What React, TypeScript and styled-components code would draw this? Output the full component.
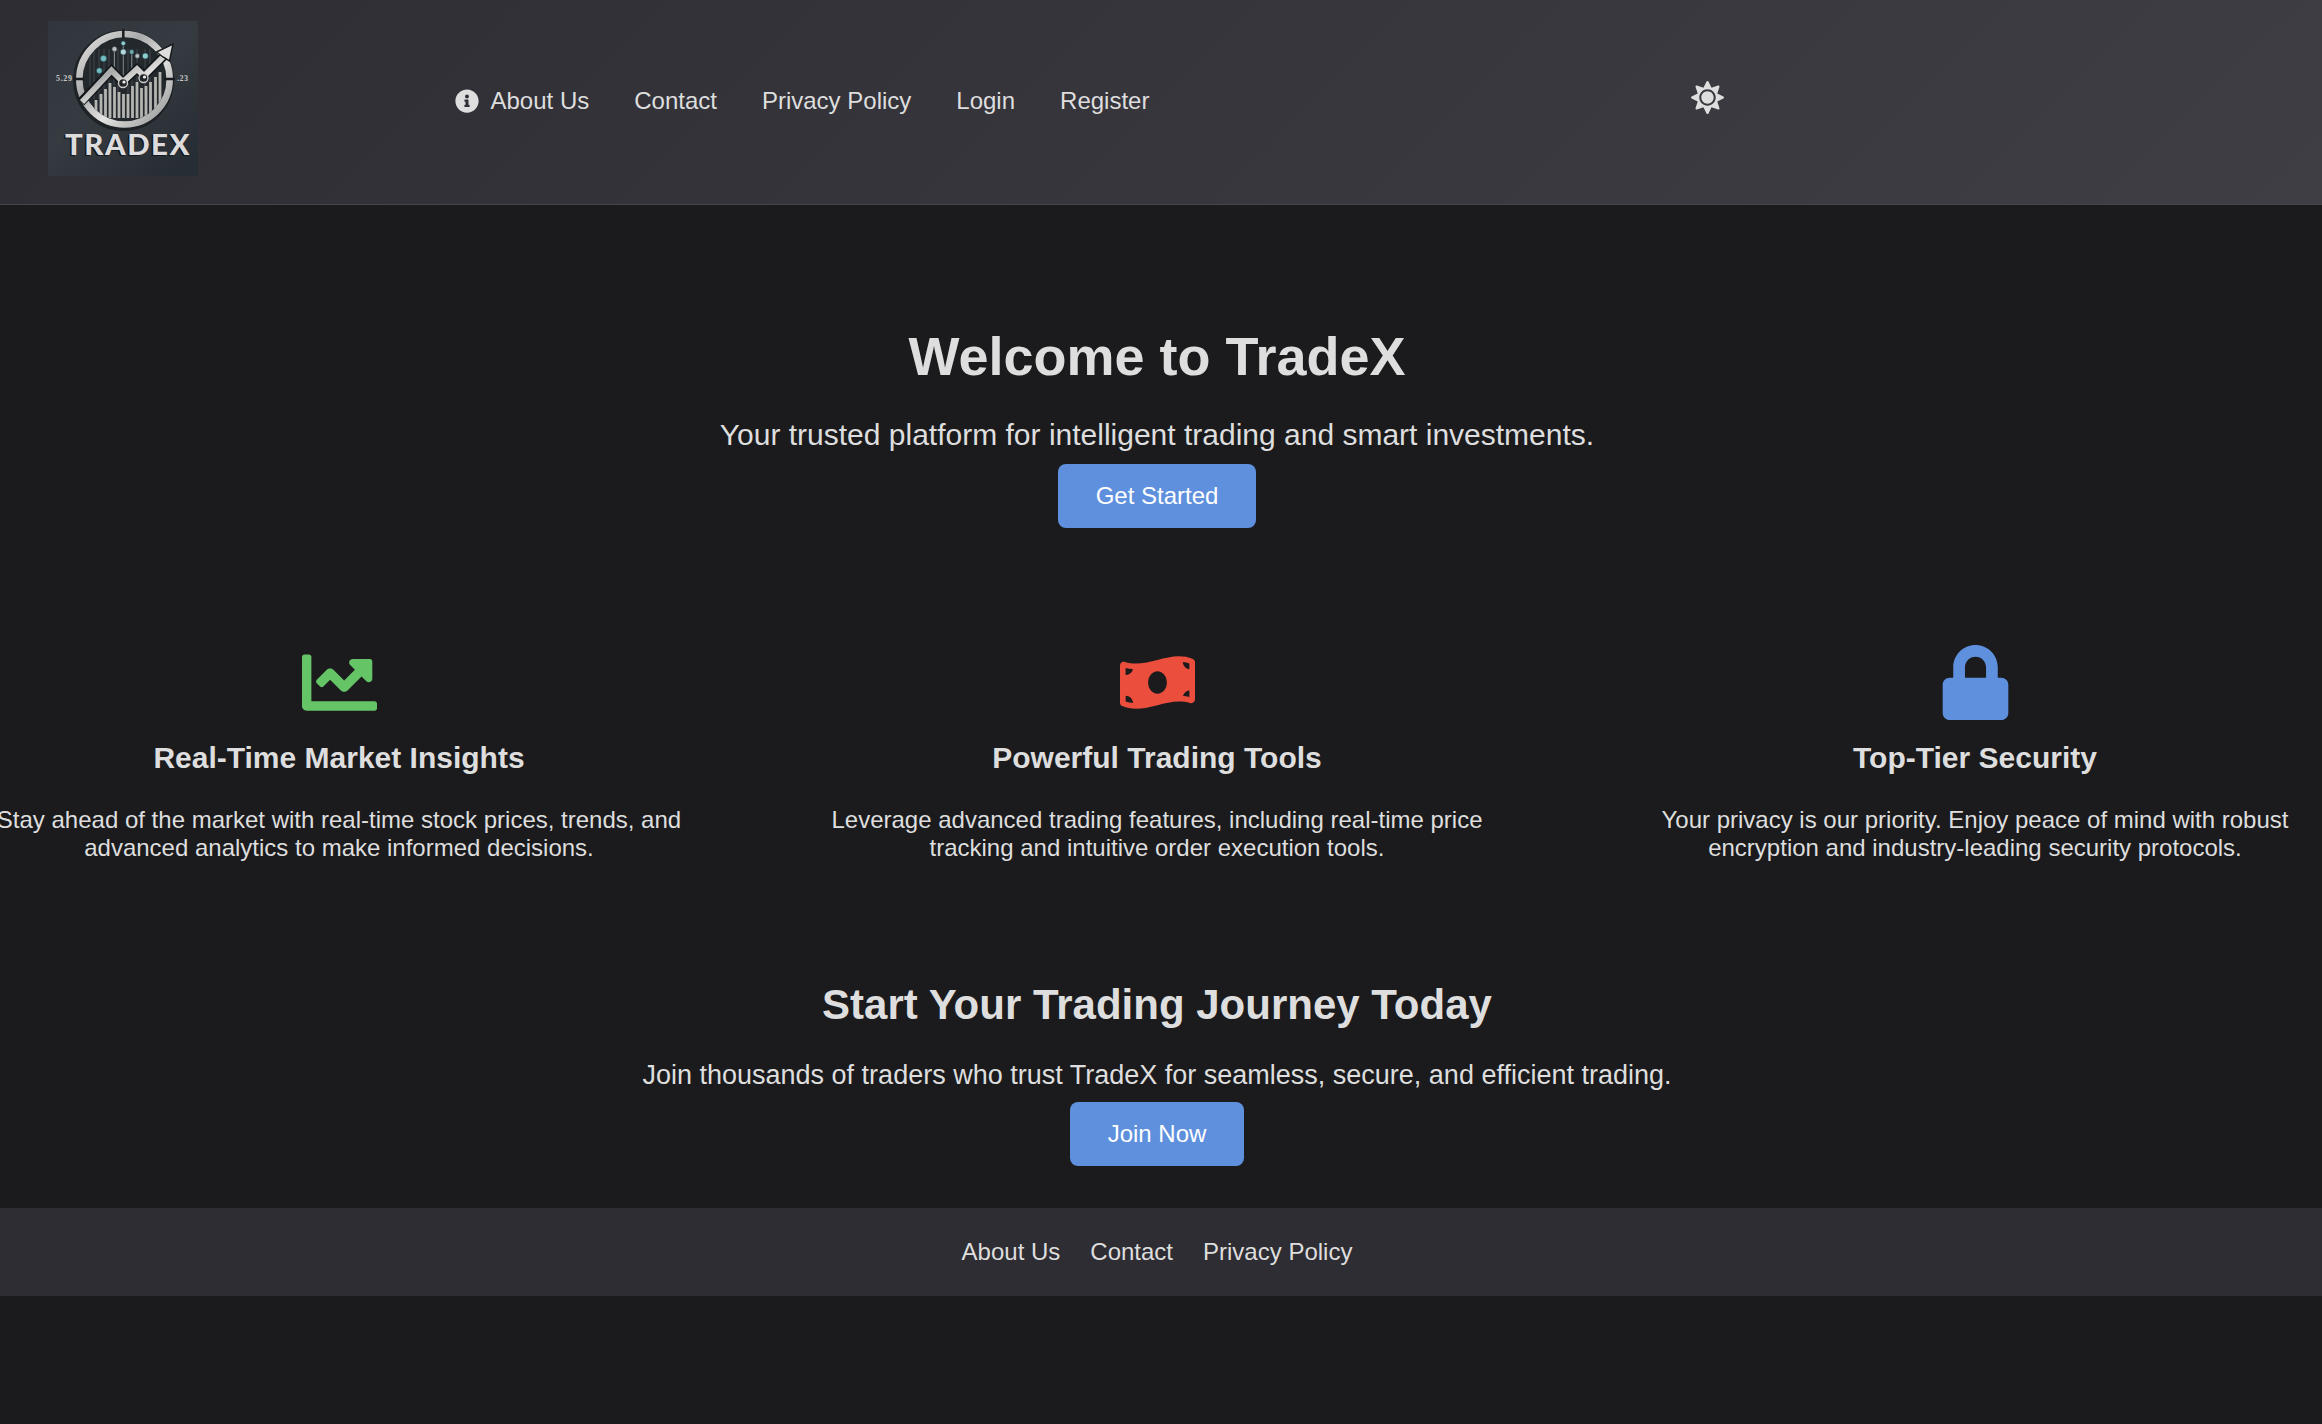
import React from "react";
import styled, { createGlobalStyle } from "styled-components";
import { FaChartLine, FaInfoCircle, FaLock, FaMoneyBillWave, FaSun } from "react-icons/fa";

const GlobalStyle = createGlobalStyle`
  * { box-sizing: border-box; }
  html, body { margin: 0; padding: 0; background: #1b1b1d; overflow: hidden; }
  body {
    font-family: "Liberation Sans", Arial, Helvetica, sans-serif;
    font-size: 24px;
    color: #dedede;
  }
`;

const Page = styled.div`
  width: 2322px;
  height: 1424px;
  overflow: hidden;
`;

const Header = styled.header`
  display: flex;
  align-items: flex-start;
  height: 205px;
  padding: 21px 0 0 48px;
  background: linear-gradient(135deg, #2e2d33, #3f3e45);
  border-bottom: 1px solid #45444b;
`;

const Logo = styled.svg`
  display: block;
  width: 150px;
  height: 155px;
`;

const Nav = styled.nav`
  display: flex;
  align-items: center;
  gap: 45px;
  margin: 66px 0 0 257px;
  line-height: 28px;
`;

const NavLink = styled.a`
  display: flex;
  align-items: center;
  gap: 11.5px;
  color: inherit;
  white-space: nowrap;
`;

const ThemeToggle = styled.button`
  display: flex;
  margin: 60px 0 0 541.5px;
  padding: 0;
  border: 0;
  background: none;
  color: #dedede;
  font-size: 33px;
`;

const Content = styled.div`
  width: 2314px;
  text-align: center;
`;

const Hero = styled.section`
  display: flex;
  flex-direction: column;
  align-items: center;
  height: 440px;
  padding-top: 119px;
`;

const HeroTitle = styled.h1`
  margin: 0;
  font-size: 54px;
  line-height: 64px;
`;

const HeroText = styled.p`
  margin: 30px 0 12px;
  font-size: 30px;
  line-height: 34px;
`;

const Button = styled.button`
  height: 64px;
  padding: 0 37.5px;
  border: 0;
  border-radius: 8px;
  background: #5e90dd;
  color: #fff;
  font: 24px/64px "Liberation Sans", Arial, sans-serif;
`;

const Features = styled.section`
  display: grid;
  grid-template-columns: repeat(3, 698px);
  justify-content: center;
  column-gap: 120px;
  height: 327px;
`;

const Feature = styled.article`
  display: flex;
  flex-direction: column;
  align-items: center;
`;

const FeatureIcon = styled.div<{ $color: string }>`
  display: flex;
  font-size: 75px;
  color: ${(p) => p.$color};
`;

const FeatureTitle = styled.h3`
  margin: 21px 0 31px;
  font-size: 30px;
  line-height: 34px;
`;

const FeatureText = styled.p`
  margin: 0;
  font-size: 24px;
  line-height: 28px;
`;

const Cta = styled.section`
  display: flex;
  flex-direction: column;
  align-items: center;
  height: 236px;
  padding-top: 8px;
`;

const CtaTitle = styled.h2`
  margin: 0;
  font-size: 42px;
  line-height: 50px;
`;

const CtaText = styled.p`
  margin: 29px 0 11px;
  font-size: 27px;
  line-height: 32px;
`;

const Footer = styled.footer`
  display: flex;
  justify-content: center;
  align-items: center;
  gap: 30px;
  height: 88px;
  padding-right: 8px;
  background: #2e2d33;
`;

const FooterLink = styled.a`
  color: inherit;
`;

const bars = [
  [48, 79], [53, 73], [57.5, 68], [62, 62], [66.5, 66], [71, 71], [75.5, 73], [80, 73],
  [84.5, 65], [89, 61], [93.5, 67], [98, 65], [102.5, 61], [107.5, 56], [112, 51],
];

const dots: [number, number, number, string][] = [
  [51.3, 49.7, 2.9, "#6fbdc0"],
  [55.5, 37.5, 3.2, "#6fbdc0"],
  [66.5, 28, 2.6, "#b9bec0"],
  [75.3, 22.3, 2.3, "#8fcdd0"],
  [75.3, 31, 3, "#b5dadd"],
  [83.7, 31, 2.4, "#6fa9ae"],
  [89.3, 35, 2.4, "#b9bec0"],
  [97.3, 35, 3, "#8ccfd1"],
];

const TradexLogo = () => (
  <Logo viewBox="0 0 150 155">
    <defs>
      <linearGradient id="plate" x1="0" y1="0" x2="0.8" y2="1">
        <stop offset="0" stopColor="#30363d" />
        <stop offset="0.5" stopColor="#363b41" />
        <stop offset="1" stopColor="#272d34" />
      </linearGradient>
      <linearGradient id="metal" x1="0" y1="0" x2="1" y2="1">
        <stop offset="0" stopColor="#e4e4e2" />
        <stop offset="0.35" stopColor="#a9aaaa" />
        <stop offset="0.6" stopColor="#e3e3e1" />
        <stop offset="1" stopColor="#8e9091" />
      </linearGradient>
      <clipPath id="dial"><circle cx="76.500" cy="58.300" r="42" /></clipPath>
    </defs>
    <rect width="150" height="155" fill="url(#plate)" />
    <circle cx="75.500" cy="59.500" r="46" fill="none" stroke="#15191d" strokeWidth="9" opacity="0.7" />
    <circle cx="76.500" cy="58.300" r="42" fill="#23282d" />
    <g stroke="#41474e" strokeWidth="1">
      {[42, 46, 51, 56, 61, 66, 70, 80, 84, 89, 97, 102].map((x) => (
        <path key={x} d={`M${x} 28V78`} clipPath="url(#dial)" />
      ))}
    </g>
    <g clipPath="url(#dial)" stroke="#b4b4b1" strokeWidth="2.800">
      {bars.map(([x, y]) => <path key={x} d={`M${x} ${y}V97`} />)}
    </g>
    <circle cx="76.500" cy="58.300" r="45.200" fill="none" stroke="url(#metal)" strokeWidth="6.500" />
    <path d="M75.300 8V17M26 58H36M116 58H127" stroke="#171b1f" strokeWidth="2.500" />
    <path d="M75.300 24V58M66.500 28V52M83.700 31V50" stroke="#7c878e" strokeWidth="1" />
    {dots.map(([x, y, r, fill]) => (
      <circle key={`${x}-${y}`} cx={x} cy={y} r={r} fill={fill} stroke="#1d3439" strokeWidth="0.600" />
    ))}
    <path d="M33 81L63.500 49.500L75 61L89 48L96 55L118 33" fill="none" stroke="#14171a" strokeWidth="9" />
    <path d="M34 81L63.500 49.500L75 61L89 48L96 55L117 34" fill="none" stroke="url(#metal)" strokeWidth="5.800" />
    <path d="M108.500 31L125 23L121.500 40L115 36Z" fill="#dededc" stroke="#191c1f" strokeWidth="1.500" />
    {[[75, 62], [95.500, 57]].map(([x, y]) => (
      <g key={x}>
        <circle cx={x} cy={y} r="4.500" fill="#22262a" stroke="#cfcfcd" strokeWidth="1.300" />
        <circle cx={x + 1} cy={y - 1} r="1.600" fill="#f1f1ef" />
      </g>
    ))}
    <g fontFamily="Liberation Serif, serif" fontWeight="700" fontSize="8" fill="#c6c8c8">
      <text x="8" y="60" textLength="16">5.29</text>
      <text x="129" y="60" textLength="11">.23</text>
    </g>
    <g fontFamily="Lato, sans-serif" fontWeight="900" fontSize="28.500">
      <text x="15.500" y="135" textLength="126" lengthAdjust="spacingAndGlyphs" letterSpacing="1.500" fill="#15191d">TRADEX</text>
      <text x="17" y="134" textLength="126" lengthAdjust="spacingAndGlyphs" letterSpacing="1.500" fill="#dddcdc">TRADEX</text>
    </g>
  </Logo>
);

const links = ["Contact", "Privacy Policy", "Login", "Register"];

const features = [
  { Icon: FaChartLine, color: "#65c466", title: "Real-Time Market Insights",
    lines: ["Stay ahead of the market with real-time stock prices, trends, and", "advanced analytics to make informed decisions."] },
  { Icon: FaMoneyBillWave, color: "#eb4e3d", title: "Powerful Trading Tools",
    lines: ["Leverage advanced trading features, including real-time price", "tracking and intuitive order execution tools."] },
  { Icon: FaLock, color: "#5e90dd", title: "Top-Tier Security",
    lines: ["Your privacy is our priority. Enjoy peace of mind with robust", "encryption and industry-leading security protocols."] },
];

export default function App() {
  return (
    <Page>
      <GlobalStyle />
      <Header>
        <TradexLogo />
        <Nav>
          <NavLink><FaInfoCircle />About Us</NavLink>
          {links.map((l) => <NavLink key={l}>{l}</NavLink>)}
        </Nav>
        <ThemeToggle aria-label="Toggle theme"><FaSun /></ThemeToggle>
      </Header>
      <Content>
        <Hero>
          <HeroTitle>Welcome to TradeX</HeroTitle>
          <HeroText>Your trusted platform for intelligent trading and smart investments.</HeroText>
          <Button>Get Started</Button>
        </Hero>
        <Features>
          {features.map(({ Icon, color, title, lines }) => (
            <Feature key={title}>
              <FeatureIcon $color={color}><Icon /></FeatureIcon>
              <FeatureTitle>{title}</FeatureTitle>
              <FeatureText>{lines[0]}<br />{lines[1]}</FeatureText>
            </Feature>
          ))}
        </Features>
        <Cta>
          <CtaTitle>Start Your Trading Journey Today</CtaTitle>
          <CtaText>Join thousands of traders who trust TradeX for seamless, secure, and efficient trading.</CtaText>
          <Button>Join Now</Button>
        </Cta>
      </Content>
      <Footer>
        <FooterLink>About Us</FooterLink>
        <FooterLink>Contact</FooterLink>
        <FooterLink>Privacy Policy</FooterLink>
      </Footer>
    </Page>
  );
}
